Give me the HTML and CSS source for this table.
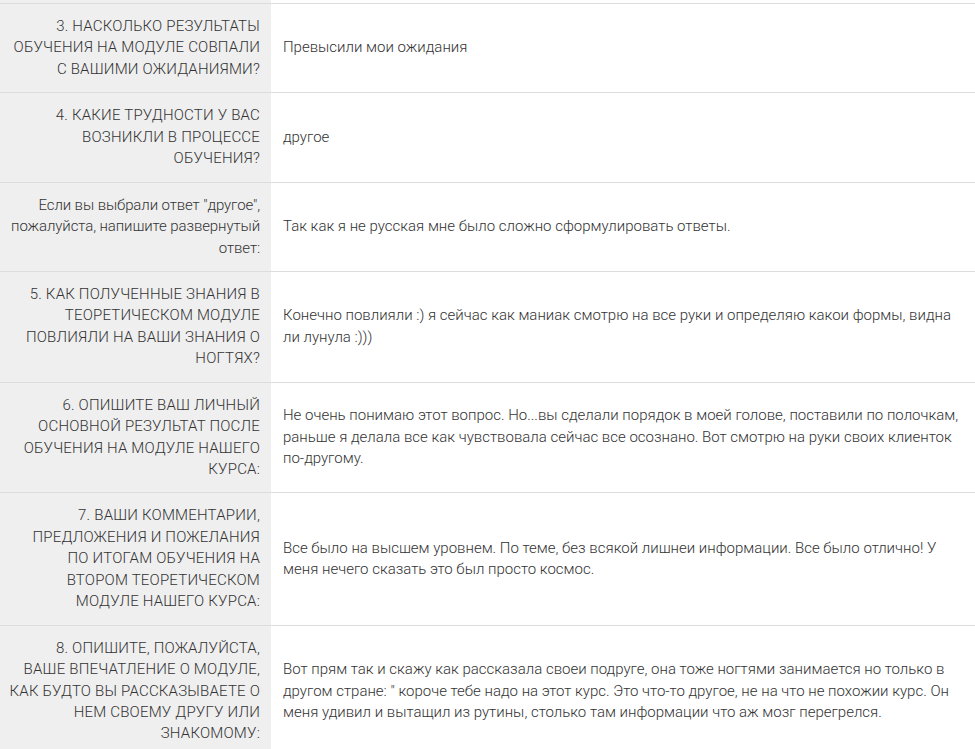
FILE: index.html
```html
<!DOCTYPE html>
<html lang="ru">

<head>
    <meta charset="UTF-8">
    <meta name="viewport" content="width=device-width, initial-scale=1.0">
    <title>Анкета</title>
    <link rel="stylesheet" href="styles.css">
</head>

<body>

    <!-- Ответы анкеты -->
    <table class="answers">
        <colgroup>
            <col class="q-col">
            <col>
        </colgroup>
        <tr class="spacer">
            <td class="q"></td>
            <td class="a"></td>
        </tr>
        <tr>
            <td class="q">3. Насколько результаты<br>обучения на модуле совпали<br>с вашими ожиданиями?</td>
            <td class="a">Превысили мои ожидания</td>
        </tr>
        <tr>
            <td class="q">4. Какие трудности у вас<br>возникли в процессе<br>обучения?</td>
            <td class="a">другое</td>
        </tr>
        <tr>
            <td class="q plain">Если вы выбрали ответ "другое",<br>пожалуйста, напишите развернутый<br>ответ:</td>
            <td class="a">Так как я не русская мне было сложно сформулировать ответы.</td>
        </tr>
        <tr>
            <td class="q">5. Как полученные знания в<br>теоретическом модуле<br>повлияли на ваши знания о<br>ногтях?</td>
            <td class="a">Конечно повлияли :) я сейчас как маниак смотрю на все руки и определяю какои формы, видна ли лунула :)))</td>
        </tr>
        <tr>
            <td class="q">6. Опишите ваш личный<br>основной результат после<br>обучения на модуле нашего<br>курса:</td>
            <td class="a">Не очень понимаю этот вопрос. Но...вы сделали порядок в моей голове, поставили по полочкам, раньше я делала все как чувствовала сейчас все осознано. Вот смотрю на руки своих клиенток по-другому.</td>
        </tr>
        <tr>
            <td class="q">7. Ваши комментарии,<br>предложения и пожелания<br>по итогам обучения на<br>втором теоретическом<br>модуле нашего курса:</td>
            <td class="a">Все было на высшем уровнем. По теме, без всякой лишнеи информации. Все было отлично! У меня нечего сказать это был просто космос.</td>
        </tr>
        <tr>
            <td class="q">8. Опишите, пожалуйста,<br>ваше впечатление о модуле,<br>как будто вы рассказываете о<br>нем своему другу или<br>знакомому:</td>
            <td class="a">Вот прям так и скажу как рассказала своеи подруге, она тоже ногтями занимается но только в другом стране: " короче тебе надо на этот курс. Это что-то другое, не на что не похожии курс. Он меня удивил и вытащил из рутины, столько там информации что аж мозг перегрелся.</td>
        </tr>
    </table>

</body>

</html>
```

FILE: styles.css
```css
body {
    margin: 0;
    background-color: #fff;
    font-family: Roboto, "Liberation Sans", sans-serif;
    font-weight: 300;
    font-size: 15px;
    line-height: 1.43;
    color: #333;
}

.answers {
    width: 100%;
    border-collapse: collapse;
    table-layout: fixed;
}

.answers .q-col {
    width: 271px;
}

.answers tr {
    border-bottom: 1px solid #dddddd;
}

.answers td {
    padding: 12px 12px;
    vertical-align: middle;
}

.answers .q {
    padding-right: 11px;
    padding-left: 6px;
    background-color: #efefef;
    text-align: right;
    text-transform: uppercase;
    letter-spacing: 0.2px;
}

.answers .q.plain {
    text-transform: none;
    letter-spacing: -0.1px;
}

.answers .a {
    padding-left: 12px;
}

.answers .spacer td {
    height: 3px;
    padding-top: 0;
    padding-bottom: 0;
}
```
